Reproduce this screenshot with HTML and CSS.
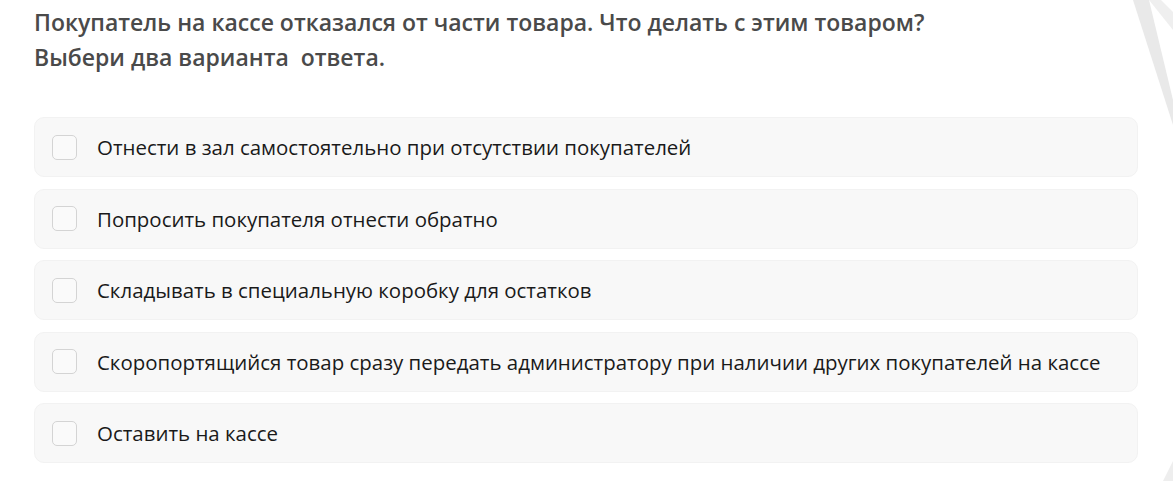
FILE: index.html
```html
<!DOCTYPE html>
<html lang="ru">
<head>
<meta charset="utf-8">
<title>Вопрос</title>
<link rel="stylesheet" href="styles.css">
</head>
<body>
<svg class="deco deco-top" width="60" height="140" viewBox="0 0 60 140" aria-hidden="true">
  <path d="M20 0 L36 0 L60 100 L60 125 Z" fill="#e9e9e9"/>
  <path d="M36 0 L48 0 L60 12 L60 30 Z" fill="#efefef"/>
</svg>
<svg class="deco deco-bottom" width="14" height="20" viewBox="0 0 14 20" aria-hidden="true">
  <path d="M14 0 L14 20 L4 20 Z" fill="#eeeeee"/>
</svg>
<main class="quiz">
  <h1 class="question">Покупатель на кассе отказался от части товара. Что делать с этим товаром?<br>Выбери два варианта&nbsp; ответа.</h1>
  <ul class="options">
    <li class="option"><span class="box"></span><span class="label">Отнести в зал самостоятельно при отсутствии покупателей</span></li>
    <li class="option"><span class="box"></span><span class="label">Попросить покупателя отнести обратно</span></li>
    <li class="option"><span class="box"></span><span class="label">Складывать в специальную коробку для остатков</span></li>
    <li class="option"><span class="box"></span><span class="label">Скоропортящийся товар сразу передать администратору при наличии других покупателей на кассе</span></li>
    <li class="option"><span class="box"></span><span class="label">Оставить на кассе</span></li>
  </ul>
</main>
</body>
</html>
```
FILE: styles.css
```css
html, body {
  margin: 0;
  padding: 0;
  background: #ffffff;
}
body {
  font-family: "Open Sans", "Noto Sans", sans-serif;
  overflow: hidden;
  position: relative;
  width: 1173px;
  height: 481px;
}
.quiz {
  padding: 5px 35px 0 34px;
}
.question {
  margin: 0;
  font-size: 23px;
  font-weight: 600;
  line-height: 35px;
  color: #4a4a4a;
}
.options {
  list-style: none;
  margin: 42px 0 0;
  padding: 0;
  display: flex;
  flex-direction: column;
  gap: 11.5px;
}
.option {
  display: flex;
  align-items: center;
  height: 60px;
  box-sizing: border-box;
  padding-left: 17px;
  background: #f8f8f8;
  border: 1px solid #f2f2f2;
  border-radius: 10px;
}
.box {
  width: 25px;
  height: 25px;
  box-sizing: border-box;
  border: 1.5px solid #d4d4d4;
  border-radius: 5px;
  background: #fafafa;
  flex: none;
}
.label {
  margin-left: 20px;
  font-size: 20.45px;
  color: #1a1a1a;
}
.deco {
  position: absolute;
}
.deco-top {
  top: 0;
  right: 0;
}
.deco-bottom {
  bottom: 0;
  right: 0;
}
```
